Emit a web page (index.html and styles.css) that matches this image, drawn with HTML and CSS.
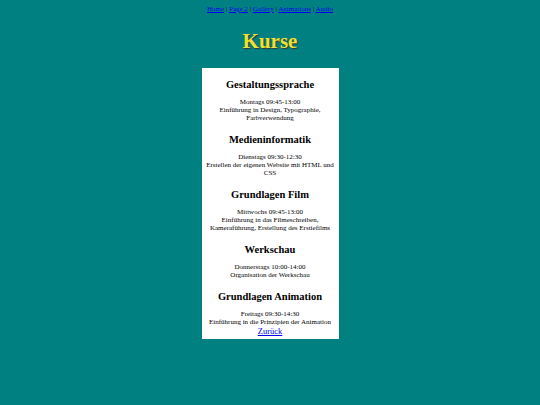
FILE: index.html
```html
<!DOCTYPE html>
<html lang="de">
<head>
<meta charset="utf-8">
<title>Kurse</title>
<link rel="stylesheet" href="styles.css">
</head>
<body>
<nav class="nav">
  <a href="#">Home</a> | <a href="#">Page 2</a> | <a href="#">Gallery</a> | <a href="#">Animations</a> | <a href="#">Audio</a>
</nav>
<h1 class="title">Kurse</h1>
<main class="box">
  <section class="course">
    <h2 class="course-name">Gestaltungssprache</h2>
    <p class="course-text">Montags 09:45-13:00<br>Einführung in Design, Typographie, Farbverwendung</p>
  </section>
  <section class="course">
    <h2 class="course-name">Medieninformatik</h2>
    <p class="course-text">Dienstags 09:30-12:30<br>Erstellen der eigenen Website mit HTML und CSS</p>
  </section>
  <section class="course">
    <h2 class="course-name">Grundlagen Film</h2>
    <p class="course-text">Mittwochs 09:45-13:00<br>Einführung in das Filmeschreiben, Kameraführung, Erstellung des Erstiefilms</p>
  </section>
  <section class="course">
    <h2 class="course-name">Werkschau</h2>
    <p class="course-text">Donnerstags 10:00-14:00<br>Organisation der Werkschau</p>
  </section>
  <section class="course">
    <h2 class="course-name">Grundlagen Animation</h2>
    <p class="course-text">Freitags 09:30-14:30<br>Einführung in die Prinzipien der Animation</p>
  </section>
  <a class="back" href="#">Zurück</a>
</main>
</body>
</html>
```
FILE: styles.css
```css
html, body {
  margin: 0;
  padding: 0;
}
body {
  background: #008080;
  font-family: "Liberation Serif", "Times New Roman", serif;
  color: #000;
}
.nav {
  text-align: center;
  font-size: 7px;
  line-height: 8px;
  padding-top: 5px;
  color: #000;
}
.nav a {
  color: #0000ee;
}
.title {
  margin: 15px 0 0;
  text-align: center;
  font-size: 21px;
  line-height: 26px;
  font-weight: bold;
  color: #f2e030;
  text-shadow: 1px 1px 1px #333;
}
.box {
  width: 131px;
  margin: 14px auto 0;
  padding: 0 3px 3px;
  background: #fff;
  text-align: center;
  display: flex;
  flex-direction: column;
  align-items: center;
}
.course {
  width: 100%;
}
.course-name {
  margin: 12px 0 7px;
  font-size: 10.5px;
  line-height: 12px;
  font-weight: bold;
}
.course:first-child .course-name {
  margin-top: 11px;
}
.course-text {
  margin: 0;
  font-size: 7px;
  line-height: 8px;
}
.back {
  font-size: 8.5px;
  line-height: 9px;
  margin-top: 1px;
  color: #0000ee;
}
```
